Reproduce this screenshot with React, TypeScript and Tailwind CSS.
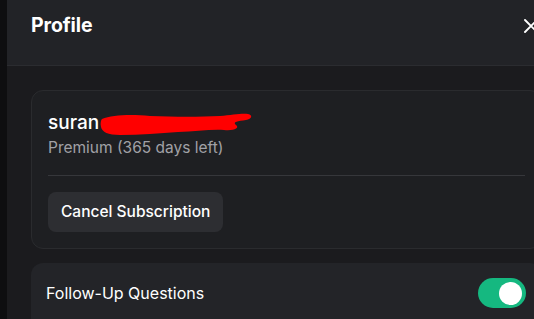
import React from "react";

export default function App() {
  return (
    <div
      className="w-[534px] h-[319px] overflow-hidden flex bg-[#0e0e10]"
      style={{ fontFamily: "Inter, 'Noto Sans', sans-serif" }}
    >
      <div className="w-[7px] shrink-0 bg-[#0e0e10]" />
      <div className="w-[559px] shrink-0 flex flex-col bg-[#1b1b1e]">
        <div className="h-[66px] shrink-0 flex items-start justify-between pl-[24px] pr-[27px] pt-[14px] bg-[#222327] border-b border-[#2b2c30]">
          <div className="h-[24px] flex items-center">
            <h2 className="text-[19.5px] font-bold text-white leading-none tracking-[-0.1px]">Profile</h2>
          </div>
          <div className="h-[24px] flex items-center">
            <svg width="16" height="16" viewBox="0 0 16 16" className="text-white">
              <path d="M2 2 L14 14 M14 2 L2 14" stroke="currentColor" strokeWidth="1.9" strokeLinecap="round" />
            </svg>
          </div>
        </div>
        <div className="flex flex-col gap-[14px] px-[24px] pt-[24px]">
          <div className="rounded-[12px] border border-[#2a2b2e] bg-[#1e1f22] px-[16px] pt-[19px] pb-[16px]">
            <div className="relative text-[19px] font-medium text-white leading-[26px]">
              suran
              <svg
                className="absolute left-[52px] top-[2px]"
                width="154"
                height="24"
                viewBox="0 0 154 24"
              >
                <path
                  d="M2 7 C12 3 30 2 50 4 C75 5 100 5 120 4 C132 3 142 1 148 2 C153 3 152 7 146 8 C138 9 132 10 136 13 C140 16 134 19 124 18 C110 17 95 20 78 20 C60 21 40 23 20 23 C8 23 2 20 1 15 C0 11 1 8 2 7 Z"
                  fill="#ff0000"
                />
              </svg>
            </div>
            <div className="text-[15.5px] text-[#a1a1a6] leading-[22px] mt-[1px]">Premium (365 days left)</div>
            <div className="h-px bg-[#36373b] mt-[16px] mb-[16px]" />
            <button className="h-[40px] px-[13px] rounded-[8px] bg-[#2d2e32] text-[15.5px] font-medium text-white">
              Cancel Subscription
            </button>
          </div>
          <div className="rounded-[12px] bg-[#232428] pl-[15px] pr-[16px] h-[70px] flex items-start justify-between pt-[15px]">
            <span className="text-[16px] font-normal text-white leading-[30px]">Follow-Up Questions</span>
            <div className="w-[48px] h-[30px] rounded-full bg-[#15b880] flex items-center justify-end pr-[4px]">
              <div className="w-[23px] h-[23px] rounded-full bg-white" />
            </div>
          </div>
        </div>
      </div>
    </div>
  );
}
